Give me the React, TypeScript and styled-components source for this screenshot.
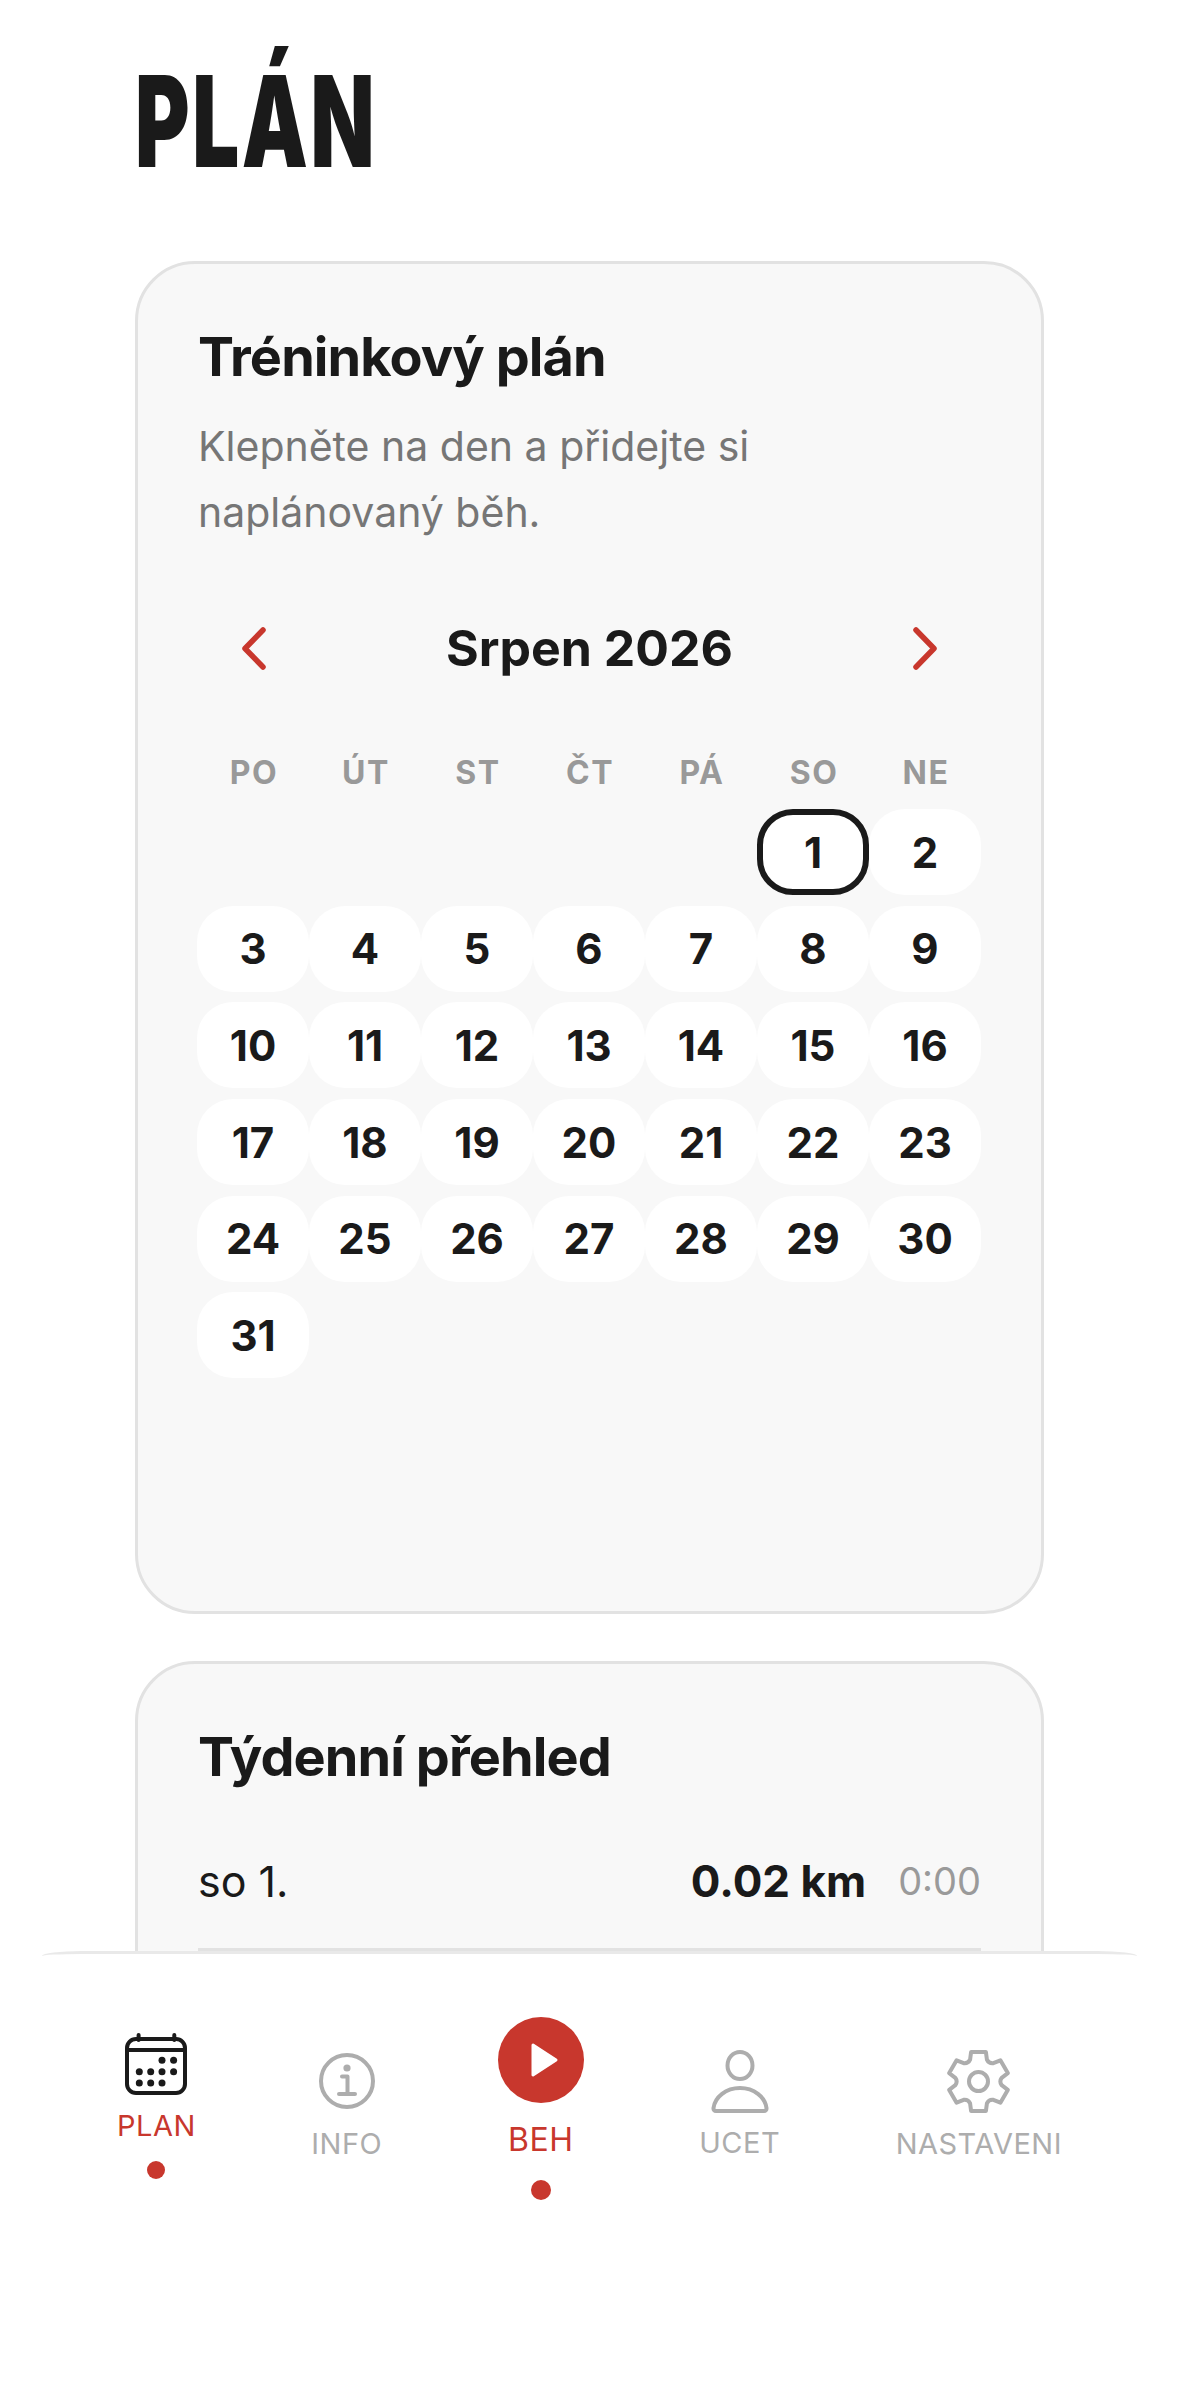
import React from 'react';
import styled, { createGlobalStyle } from 'styled-components';

const INK = '#1a1a1a';
const RED = '#c8372d';
const MUTED = '#adadad';

const GlobalStyle = createGlobalStyle`
  html, body {
    margin: 0;
    padding: 0;
    background: #fff;
  }
  body {
    font-family: Inter, "Noto Sans", sans-serif;
    color: ${INK};
  }
  * { box-sizing: border-box; }
`;

const Screen = styled.div`
  position: relative;
  width: 1179px;
  height: 2398px;
  overflow: hidden;
  background: #fff;
`;

const Content = styled.main`
  display: flex;
  flex-direction: column;
  padding: 0 135px;
`;

const TitleBar = styled.header`
  height: 261px;
  padding-top: 58px;
`;

const PageTitle = styled.h1`
  display: inline-block;
  margin: 0;
  font-family: Inter, sans-serif;
  font-size: 127px;
  line-height: 127px;
  font-weight: 900;
  letter-spacing: 4px;
  color: ${INK};
  transform: scaleX(0.655);
  transform-origin: left center;
`;

const Card = styled.section<{ $height?: number }>`
  display: flex;
  flex-direction: column;
  height: ${(p) => p.$height ?? 1353}px;
  margin-bottom: 47px;
  padding: 60px 60px 0;
  background: #f8f8f8;
  border: 3px solid #e2e2e2;
  border-radius: 60px;
`;

const CardTitle = styled.h2`
  margin: 0;
  font-size: 54px;
  line-height: 66px;
  font-weight: 700;
  letter-spacing: -0.9px;
`;

const Hint = styled.p`
  margin: 23px 0 0;
  width: 640px;
  font-size: 41px;
  line-height: 66px;
  font-weight: 400;
  color: #767676;
`;

const MonthBar = styled.div`
  display: flex;
  align-items: center;
  justify-content: space-between;
  height: 60px;
  margin-top: 73px;
  padding: 0 44px;
`;

const Arrow = styled.button`
  display: flex;
  padding: 0;
  border: 0;
  background: none;
`;

const MonthName = styled.div`
  font-size: 50px;
  line-height: 60px;
  font-weight: 700;
`;

const WeekHead = styled.div`
  display: grid;
  grid-template-columns: repeat(7, 112px);
  margin-top: 75px;
`;

const WeekDay = styled.div`
  text-align: center;
  font-size: 32px;
  line-height: 40px;
  font-weight: 700;
  letter-spacing: 1.5px;
  color: #999;
`;

const DayGrid = styled.div`
  display: grid;
  grid-template-columns: repeat(7, 112px);
  grid-auto-rows: 86px;
  row-gap: 10.7px;
  margin: 16px 0 0 -1px;
`;

const Day = styled.div<{ $today?: boolean; $start?: number }>`
  display: flex;
  align-items: center;
  justify-content: center;
  grid-column-start: ${(p) => p.$start ?? 'auto'};
  font-size: 42px;
  font-weight: 700;
  background: #fff;
  border: ${(p) => (p.$today ? `6px solid ${INK}` : '0')};
  border-radius: 36px;
`;

const SummaryRow = styled.div`
  display: flex;
  align-items: center;
  height: 138px;
  margin-top: 23px;
  border-bottom: 3px solid #e2e2e2;
`;

const SummaryDay = styled.div`
  flex: 1;
  font-size: 43px;
`;

const SummaryKm = styled.div`
  font-size: 44px;
  font-weight: 700;
`;

const SummaryTime = styled.div`
  margin-left: 32px;
  font-size: 38px;
  color: #9a9a9a;
`;

const BottomWrap = styled.div`
  position: absolute;
  left: 0;
  right: 0;
  top: 1951px;
  bottom: 0;
  background: #fff;
`;

const Nav = styled.nav`
  display: flex;
  align-items: center;
  justify-content: space-between;
  height: 306px;
  margin: 0 42px;
  padding: 0 75px;
  border-top: 3px solid #e9e9e9;
  border-radius: 40px 40px 0 0 / 5px 5px 0 0;
`;

const NavItem = styled.div<{ $drop?: number }>`
  display: flex;
  flex-direction: column;
  align-items: center;
  margin-top: ${(p) => p.$drop ?? 0}px;
`;

const NavLabel = styled.div<{ $active?: boolean; $gap: number; $big?: boolean }>`
  margin-top: ${(p) => p.$gap}px;
  font-size: ${(p) => (p.$big ? 32 : 29)}px;
  line-height: 36px;
  font-weight: 400;
  letter-spacing: 0.5px;
  color: ${(p) => (p.$active ? RED : MUTED)};
`;

const NavDot = styled.div<{ $gap: number; $size: number }>`
  width: ${(p) => p.$size}px;
  height: ${(p) => p.$size}px;
  margin-top: ${(p) => p.$gap}px;
  border-radius: 50%;
  background: ${RED};
`;

const PlayBadge = styled.div`
  display: flex;
  align-items: center;
  justify-content: center;
  width: 86px;
  height: 86px;
  padding-left: 6px;
  border-radius: 50%;
  background: ${RED};
`;

const Chevron = ({ dir }: { dir: 'left' | 'right' }) => (
  <svg width="24" height="43" viewBox="0 0 24 43" fill="none">
    <path
      d={dir === 'left' ? 'M21 3 L3 21.5 L21 40' : 'M3 3 L21 21.5 L3 40'}
      stroke={RED}
      strokeWidth="5.5"
      strokeLinecap="round"
      strokeLinejoin="round"
    />
  </svg>
);

const CALENDAR_DOTS = [
  [37, 27.3], [48.6, 27.3],
  [14.3, 38.7], [25.7, 38.7], [37, 38.7], [48.6, 38.7],
  [14.3, 50], [25.7, 50], [37, 50],
];

const CalendarIcon = () => (
  <svg width="62" height="62" viewBox="0 0 62 62" fill="none">
    <rect x="2" y="6" width="58" height="54" rx="9" stroke={INK} strokeWidth="4" />
    <path d="M2 17 H60" stroke={INK} strokeWidth="4" />
    <path d="M13.6 2 V7 M49.3 2 V7" stroke={INK} strokeWidth="4" strokeLinecap="round" />
    {CALENDAR_DOTS.map(([cx, cy]) => (
      <circle key={`${cx}-${cy}`} cx={cx} cy={cy} r="3.5" fill={INK} />
    ))}
  </svg>
);

const InfoIcon = () => (
  <svg width="56" height="56" viewBox="0 0 56 56" fill="none">
    <circle cx="28" cy="28" r="26" stroke={MUTED} strokeWidth="4" />
    <circle cx="28" cy="15" r="3.6" fill={MUTED} />
    <path d="M23 23.5 H28.5 V41 M20 41 H36" stroke={MUTED} strokeWidth="4" strokeLinecap="round" strokeLinejoin="round" />
  </svg>
);

const PlayIcon = () => (
  <svg width="30" height="36" viewBox="0 0 30 36">
    <path d="M4 3 L27 18 L4 33 Z" fill="#fff" stroke="#fff" strokeWidth="3" strokeLinejoin="round" />
  </svg>
);

const PersonIcon = () => (
  <svg width="58" height="63" viewBox="0 0 58 63" fill="none">
    <ellipse cx="29" cy="15.5" rx="12.5" ry="13.5" stroke={MUTED} strokeWidth="4" />
    <path d="M2.5 58 C4 47 15 38 29 38 C43 38 54 47 55.5 58 C55.7 59.8 54.6 61 53 61 H5 C3.4 61 2.3 59.8 2.5 58 Z" stroke={MUTED} strokeWidth="4" strokeLinejoin="round" />
  </svg>
);

// six rounded teeth, one pointing straight up
const gearPath = () => {
  const cx = 31.5;
  const cy = 32.5;
  const polar = (r: number, deg: number) => {
    const a = ((deg - 90) * Math.PI) / 180;
    return `${(cx + r * Math.cos(a)).toFixed(1)} ${(cy + r * Math.sin(a)).toFixed(1)}`;
  };
  let d = '';
  for (let k = 0; k < 6; k++) {
    const t = k * 60;
    d += `${k === 0 ? 'M' : 'L'}${polar(30.5, t - 14)} L${polar(30.5, t + 14)} L${polar(23.5, t + 21)} Q${polar(20.5, t + 30)} ${polar(23.5, t + 39)} `;
  }
  return `${d}Z`;
};

const GearIcon = () => (
  <svg width="63" height="65" viewBox="0 0 63 65" fill="none">
    <circle cx="31.5" cy="32.5" r="9.5" stroke={MUTED} strokeWidth="4" />
    <path d={gearPath()} stroke={MUTED} strokeWidth="4" strokeLinejoin="round" />
  </svg>
);

const WEEK_DAYS = ['PO', 'ÚT', 'ST', 'ČT', 'PÁ', 'SO', 'NE'];
const DAYS = Array.from({ length: 31 }, (_, i) => i + 1);

const App = () => {
  return (
    <Screen>
      <GlobalStyle />
      <Content>
        <TitleBar>
          <PageTitle>PLÁN</PageTitle>
        </TitleBar>

        <Card>
          <CardTitle>Tréninkový plán</CardTitle>
          <Hint>Klepněte na den a přidejte si naplánovaný běh.</Hint>
          <MonthBar>
            <Arrow><Chevron dir="left" /></Arrow>
            <MonthName>Srpen 2026</MonthName>
            <Arrow><Chevron dir="right" /></Arrow>
          </MonthBar>
          <WeekHead>
            {WEEK_DAYS.map((d) => (
              <WeekDay key={d}>{d}</WeekDay>
            ))}
          </WeekHead>
          <DayGrid>
            {DAYS.map((d) => (
              <Day key={d} $today={d === 1} $start={d === 1 ? 6 : undefined}>
                {d}
              </Day>
            ))}
          </DayGrid>
        </Card>

        <Card $height={600}>
          <CardTitle>Týdenní přehled</CardTitle>
          <SummaryRow>
            <SummaryDay>so 1.</SummaryDay>
            <SummaryKm>0.02 km</SummaryKm>
            <SummaryTime>0:00</SummaryTime>
          </SummaryRow>
        </Card>
      </Content>

      <BottomWrap>
        <Nav>
          <NavItem>
            <CalendarIcon />
            <NavLabel $active $gap={13}>PLAN</NavLabel>
            <NavDot $gap={17} $size={18} />
          </NavItem>
          <NavItem $drop={4}>
            <InfoIcon />
            <NavLabel $gap={17}>INFO</NavLabel>
          </NavItem>
          <NavItem $drop={6}>
            <PlayBadge><PlayIcon /></PlayBadge>
            <NavLabel $active $big $gap={19}>BEH</NavLabel>
            <NavDot $gap={22} $size={20} />
          </NavItem>
          <NavItem>
            <PersonIcon />
            <NavLabel $gap={12}>UCET</NavLabel>
          </NavItem>
          <NavItem>
            <GearIcon />
            <NavLabel $gap={12}>NASTAVENI</NavLabel>
          </NavItem>
        </Nav>
      </BottomWrap>
    </Screen>
  );
};

export default App;
